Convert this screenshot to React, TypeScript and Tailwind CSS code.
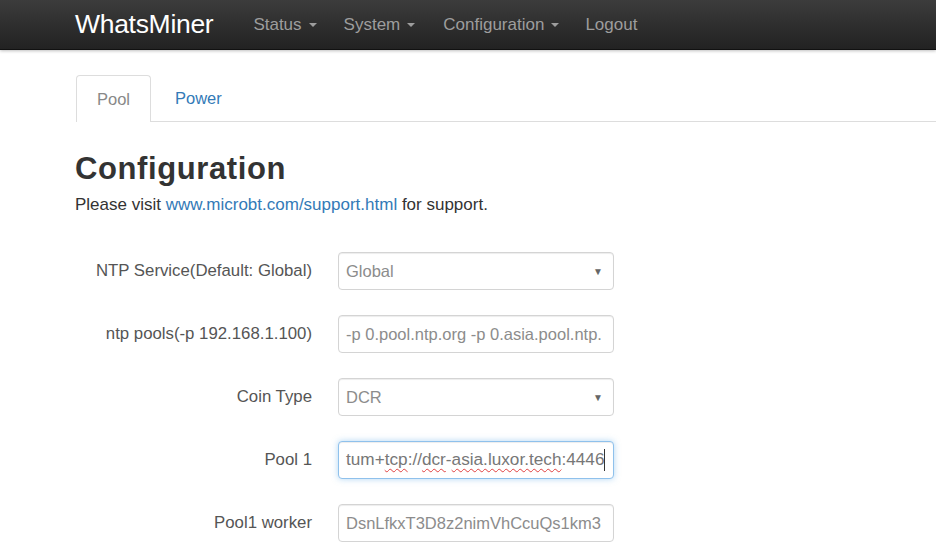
import React from 'react';

const font = { fontFamily: '"Liberation Sans", Arial, sans-serif' };

const Caret = () => (
  <span className="ml-[7px] inline-block h-0 w-0 border-x-[4.5px] border-t-[4.5px] border-x-transparent border-t-[#9d9d9d] align-middle" />
);

const SelectBox: React.FC<{ value: string }> = ({ value }) => (
  <div className="flex h-[38px] w-[276px] items-center justify-between rounded-[4px] border border-[#d4d4d4] bg-white pl-[7px] pr-[10px] text-[16.5px] text-[#8c8c8c] shadow-[inset_0_1px_1px_rgba(0,0,0,0.075)]">
    <span>{value}</span>
    <span className="text-[10px] text-[#666]">▼</span>
  </div>
);

const TextBox: React.FC<{ value: string; focused?: boolean; children?: React.ReactNode }> = ({ value, focused, children }) => (
  <div
    className={`flex h-[38px] w-[276px] items-center overflow-hidden whitespace-nowrap rounded-[4px] border bg-white pl-[7px] text-[16.5px] text-[#8c8c8c] ${
      focused
        ? 'border-[#8fc1ec] shadow-[inset_0_1px_1px_rgba(0,0,0,0.075),0_0_6px_rgba(102,175,233,0.5)]'
        : 'border-[#d4d4d4] shadow-[inset_0_1px_1px_rgba(0,0,0,0.075)]'
    }`}
  >
    {children ?? value}
  </div>
);

const Row: React.FC<{ label: string; children: React.ReactNode }> = ({ label, children }) => (
  <div className="flex items-center">
    <label className="w-[237px] text-right text-[16.8px] text-[#555]">{label}</label>
    <div className="ml-[26px]">{children}</div>
  </div>
);

const squiggle = 'underline decoration-wavy decoration-[#e04040] decoration-1 underline-offset-[3px]';

export default function App() {
  return (
    <div className="min-h-[552px] bg-white" style={font}>
      {/* Navbar */}
      <div className="flex h-[50px] items-center border-b border-[#111] bg-gradient-to-b from-[#3c3c3c] to-[#222] pl-[75px] shadow-[0_1px_3px_rgba(0,0,0,0.25)]">
        <span className="text-[26.5px] tracking-[-0.3px] text-white">WhatsMiner</span>
        <nav className="ml-[40px] flex items-center text-[17px] text-[#9d9d9d]">
          <span className="flex items-center">Status<Caret /></span>
          <span className="ml-[27px] flex items-center">System<Caret /></span>
          <span className="ml-[28px] flex items-center">Configuration<Caret /></span>
          <span className="ml-[26px]">Logout</span>
        </nav>
      </div>

      {/* Tabs */}
      <div className="ml-[76px] mt-[25px] flex h-[47px] border-b border-[#ddd]">
        <div className="-mb-px flex h-[47px] w-[75px] items-center justify-center rounded-t-[4px] border border-b-0 border-[#ddd] bg-white text-[16.5px] text-[#888]">
          Pool
        </div>
        <div className="ml-[24px] flex items-center text-[16.5px] text-[#337ab7]">Power</div>
      </div>

      {/* Content */}
      <div className="pl-[75px]">
        <h1 className="mt-[28px] text-[31px] font-bold leading-[38px] tracking-[0.6px] text-[#333]">Configuration</h1>
        <p className="mt-[6px] text-[17px] leading-[22px] text-[#333]">
          Please visit <span className="text-[#337ab7]">www.microbt.com/support.html</span> for support.
        </p>

        <div className="mt-[36px] flex flex-col gap-[25px]">
          <Row label="NTP Service(Default: Global)">
            <SelectBox value="Global" />
          </Row>
          <Row label="ntp pools(-p 192.168.1.100)">
            <TextBox value="-p 0.pool.ntp.org -p 0.asia.pool.ntp." />
          </Row>
          <Row label="Coin Type">
            <SelectBox value="DCR" />
          </Row>
          <Row label="Pool 1">
            <TextBox value="" focused>
              <span className="text-[17.2px] text-[#777]">
                tum+<span className={squiggle}>tcp</span>://<span className={squiggle}>dcr</span>-
                <span className={squiggle}>asia.luxor.tech</span>:4446
              </span>
              <span className="inline-block h-[22px] w-px bg-[#333]" />
            </TextBox>
          </Row>
          <Row label="Pool1 worker">
            <TextBox value="DsnLfkxT3D8z2nimVhCcuQs1km3" />
          </Row>
        </div>
      </div>
    </div>
  );
}
